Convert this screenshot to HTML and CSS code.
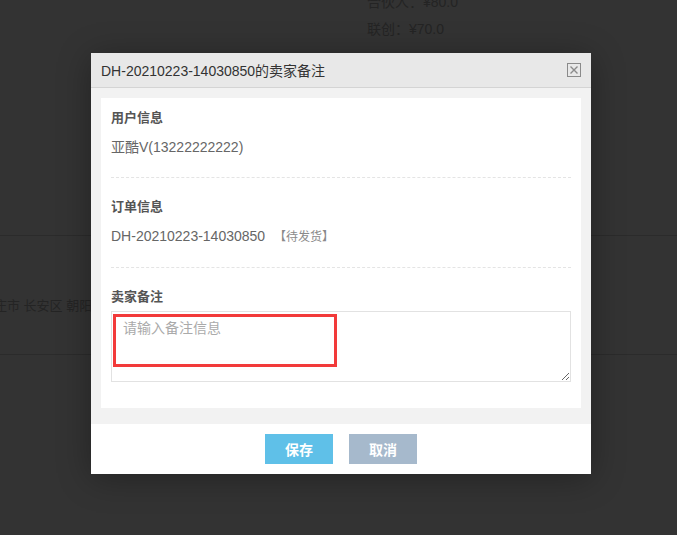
FILE: index.html
```html
<!DOCTYPE html>
<html lang="zh-CN">
<head>
<meta charset="utf-8">
<title>卖家备注</title>
<link rel="stylesheet" href="styles.css">
</head>
<body>
<div class="page">
  <div class="prices">
    <div class="price-line">合伙人：¥80.0</div>
    <div class="price-line">联创：¥70.0</div>
  </div>
  <div class="row row-top"></div>
  <div class="row row-addr">
    <div class="addr">石家庄市 长安区 朝阳路</div>
  </div>
</div>

<div class="dialog">
  <div class="dialog-head">
    <span class="dialog-title">DH-20210223-14030850的卖家备注</span>
    <span class="close-btn">
      <svg width="14" height="14" viewBox="0 0 14 14">
        <rect x="0.5" y="0.5" width="13" height="13" fill="none" stroke="#8a8a8a" stroke-width="1"/>
        <path d="M3.5 3.5 L10.5 10.5 M10.5 3.5 L3.5 10.5" stroke="#8a8a8a" stroke-width="1.4" fill="none"/>
      </svg>
    </span>
  </div>
  <div class="dialog-body">
    <div class="panel">
      <div class="section">
        <div class="label">用户信息</div>
        <div class="value">亚酷V(13222222222)</div>
      </div>
      <div class="section">
        <div class="label">订单信息</div>
        <div class="value">DH-20210223-14030850 <span class="status">【待发货】</span></div>
      </div>
      <div class="section last">
        <div class="label">卖家备注</div>
        <div class="note-wrap">
          <textarea class="note" placeholder="请输入备注信息"></textarea>
          <div class="mark"></div>
        </div>
      </div>
    </div>
  </div>
  <div class="dialog-foot">
    <button class="btn btn-save">保存</button>
    <button class="btn btn-cancel">取消</button>
  </div>
</div>
</body>
</html>
```

FILE: styles.css
```css
html, body {
  margin: 0;
  padding: 0;
}
body {
  background: #333333;
  font-family: "Liberation Sans", "Noto Sans CJK SC", sans-serif;
  width: 677px;
  height: 535px;
  overflow: hidden;
  position: relative;
}
.page {
  color: #242424;
}
.prices {
  padding-left: 367px;
  margin-top: -11px;
  font-size: 14px;
}
.price-line {
  line-height: 27px;
  height: 27px;
}
.row-top {
  height: 192px;
  border-bottom: 1px solid #2b2b2b;
}
.row-addr {
  height: 118px;
  border-bottom: 1px solid #2b2b2b;
  box-sizing: content-box;
}
.addr {
  padding-top: 60px;
  margin-left: -32px;
  font-size: 13px;
  line-height: 20px;
  white-space: nowrap;
}

.dialog {
  position: absolute;
  left: 91px;
  top: 53px;
  width: 500px;
  background: #ffffff;
  box-shadow: 0 4px 32px rgba(0, 0, 0, 0.32);
}
.dialog-head {
  height: 34px;
  background: #e8e8e8;
  border-bottom: 1px solid #d4d4d4;
  display: flex;
  align-items: center;
  justify-content: space-between;
  padding: 0 10px;
}
.dialog-title {
  font-size: 14px;
  color: #333333;
  line-height: 34px;
  padding-top: 2px;
}
.close-btn {
  display: flex;
  width: 14px;
  height: 14px;
}
.dialog-body {
  background: #f2f2f2;
  padding: 10px 10px 16px;
}
.panel {
  background: #ffffff;
  padding: 0 10px 26px;
}
.section {
  padding: 19px 0 20px;
  border-bottom: 1px dashed #e4e4e4;
}
.section:first-child {
  padding-top: 10px;
}
.section.last {
  border-bottom: none;
  padding-bottom: 0;
}
.label {
  font-size: 13px;
  font-weight: bold;
  color: #555555;
  line-height: 20px;
}
.value {
  margin-top: 9px;
  font-size: 14px;
  color: #666666;
  line-height: 20px;
}
.status {
  font-size: 12px;
  color: #8a8a8a;
  margin-left: 5px;
}
.note-wrap {
  position: relative;
  margin-top: 4px;
}
.note {
  display: block;
  box-sizing: border-box;
  width: 460px;
  height: 71px;
  margin: 0;
  border: 1px solid #e2e2e2;
  padding: 6px 11px;
  font-family: "Liberation Sans", "Noto Sans CJK SC", sans-serif;
  font-size: 14px;
  line-height: 20px;
  color: #555555;
  outline: none;
  background: #ffffff;
}
.note::placeholder {
  color: #aaaaaa;
}
.mark {
  position: absolute;
  left: 2px;
  top: 3px;
  width: 224px;
  height: 53px;
  box-sizing: border-box;
  border: 3px solid #f23a3a;
  pointer-events: none;
}
.dialog-foot {
  height: 50px;
  display: flex;
  align-items: center;
  justify-content: center;
  gap: 16px;
}
.btn {
  width: 68px;
  height: 30px;
  border: none;
  padding: 0;
  margin: 0;
  color: #ffffff;
  font-family: "Liberation Sans", "Noto Sans CJK SC", sans-serif;
  font-size: 14px;
  font-weight: bold;
  cursor: pointer;
}
.btn-save {
  background: #5fc0e8;
}
.btn-cancel {
  background: #a6b9cc;
}
```
